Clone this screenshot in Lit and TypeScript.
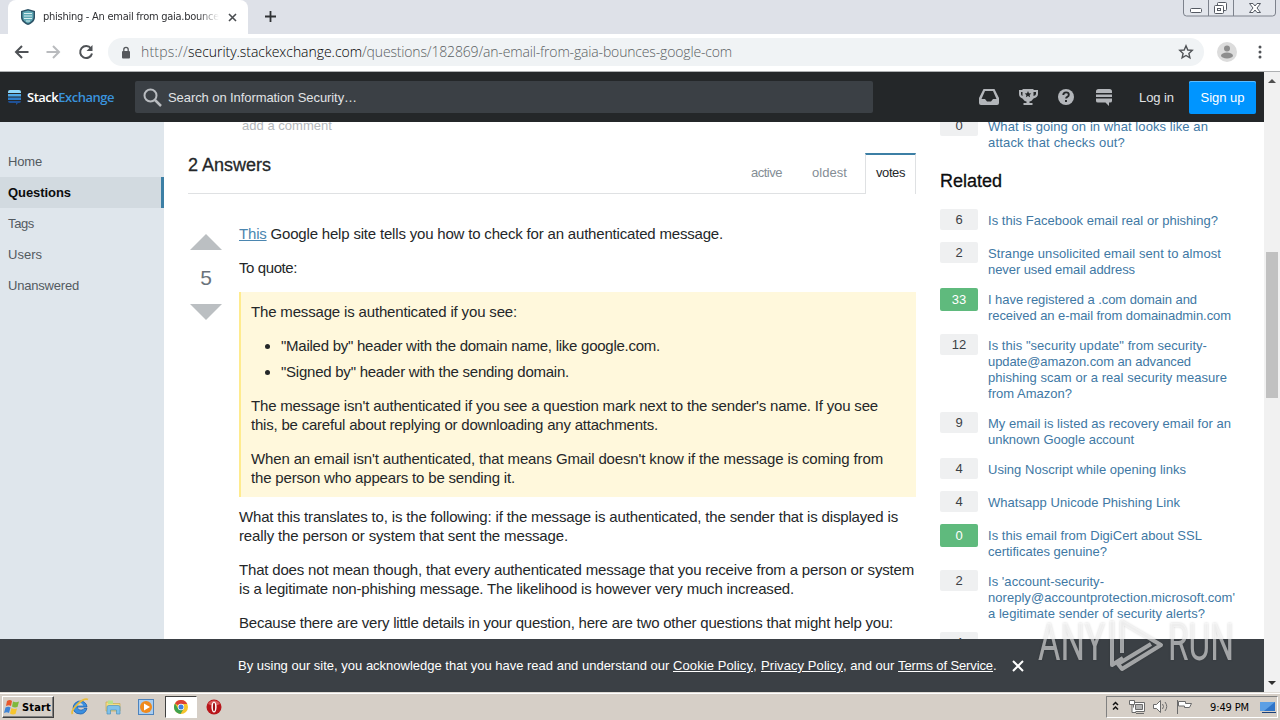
import { LitElement, css, html, svg } from 'lit';
import { customElement, property } from 'lit/decorators.js';

interface RelatedLink {
  votes: number;
  accepted?: boolean;
  lines: [string, number][];
}

const LINKED: RelatedLink = {
  votes: 0,
  lines: [
    ['What is going on in what looks like an', 220],
    ['attack that checks out?', 137],
  ],
};

const RELATED: RelatedLink[] = [
  { votes: 6, lines: [['Is this Facebook email real or phishing?', 230]] },
  {
    votes: 2,
    lines: [
      ['Strange unsolicited email sent to almost', 233],
      ['never used email address', 147],
    ],
  },
  {
    votes: 33,
    accepted: true,
    lines: [
      ['I have registered a .com domain and', 209],
      ['received an e-mail from domainadmin.com', 243],
    ],
  },
  {
    votes: 12,
    lines: [
      ['Is this "security update" from security-', 219],
      ['update@amazon.com an advanced', 203],
      ['phishing scam or a real security measure', 239],
      ['from Amazon?', 84],
    ],
  },
  {
    votes: 9,
    lines: [
      ['My email is listed as recovery email for an', 243],
      ['unknown Google account', 146],
    ],
  },
  { votes: 4, lines: [['Using Noscript while opening links', 198]] },
  { votes: 4, lines: [['Whatsapp Unicode Phishing Link', 192]] },
  {
    votes: 0,
    accepted: true,
    lines: [
      ['Is this email from DigiCert about SSL', 214],
      ['certificates genuine?', 119],
    ],
  },
  {
    votes: 2,
    lines: [
      ["Is 'account-security-", 116],
      ["noreply@accountprotection.microsoft.com'", 247],
      ['a legitimate sender of security alerts?', 217],
    ],
  },
  { votes: 4, lines: [['Email link in a suspicious message', 210]] },
];

const NAV: [string, number][] = [
  ['Home', 34],
  ['Questions', 63],
  ['Tags', 26],
  ['Users', 34],
  ['Unanswered', 71],
];

/** One line of text, tracked so that it runs exactly `width` pixels. */
@customElement('fit-line')
export class FitLine extends LitElement {
  @property({ type: Number }) width = 0;

  async firstUpdated() {
    await document.fonts.ready;
    const natural = this.getBoundingClientRect().width;
    const count = (this.textContent ?? '').length;
    if (this.width && count) {
      this.style.letterSpacing = `${(this.width - natural) / count}px`;
    }
  }

  render() {
    return html`<slot></slot>`;
  }

  static styles = css`
    :host {
      display: inline-block;
      white-space: pre;
    }
  `;
}

@customElement('browser-chrome')
export class BrowserChrome extends LitElement {
  render() {
    return html`
      <div class="tabs">
        <div class="tab">
          <svg class="shield" width="16" height="18" viewBox="0 0 16 18">
            <path d="M8 1 15 3v6c0 4-3 6.500-7 8-4-1.500-7-4-7-8V3z" fill="#2c5266" />
            <path d="M8 2.500 13.500 4v5c0 3-2.500 5-5.500 6.500C5 14 2.500 12 2.500 9V4z" fill="#5fa8b5" />
            <path d="M4 5.500h8M4 8h8M4 10.500h8M6 13h4" stroke="#d8eef0" stroke-width="1" />
          </svg>
          <div class="title"><fit-line width="181">phishing - An email from gaia.bounces</fit-line></div>
          <svg class="x" width="9" height="9" viewBox="0 0 9 9">
            <path d="M1 1l7 7M8 1l-7 7" stroke="#4a4d51" stroke-width="1.600" />
          </svg>
        </div>
        <svg class="plus" width="13" height="13" viewBox="0 0 13 13">
          <path d="M6.500 1v11M1 6.500h11" stroke="#303235" stroke-width="1.800" />
        </svg>
        <svg class="win" width="94" height="18" viewBox="0 0 94 18">
          <path d="M.5 0v13q0 3 3 3h86q3 0 3-3V0M25.500 0v16M50.500 0v16" fill="#e3e6ec" stroke="#7d828c" />
          <rect x="7.500" y="8.500" width="11" height="4" rx="1" fill="#fff" stroke="#555a63" />
          <rect x="34.500" y="2.500" width="9" height="8" rx="1" fill="#fff" stroke="#555a63" />
          <rect x="31.500" y="5.500" width="9" height="8" rx="1" fill="#fff" stroke="#555a63" />
          <rect x="34.500" y="8.500" width="3" height="2" fill="#fff" stroke="#555a63" />
          <path d="M66.500 3.500h3.500l2 2.500 2-2.500h3.500l-3.500 4.500 3.500 4.500h-3.500l-2-2.500-2 2.500h-3.500l3.500-4.500z" fill="#fff" stroke="#555a63" />
        </svg>
      </div>
      <div class="bar">
        <svg width="80" height="20" viewBox="0 0 80 20">
          <path d="M14.500 10H2M8 4l-6 6 6 6" fill="none" stroke="#4f5256" stroke-width="2" />
          <path d="M32.500 10H45M39 4l6 6-6 6" fill="none" stroke="#b9bbbe" stroke-width="2" />
          <path d="M77 6.500A6 6 0 1 0 78 11.500" fill="none" stroke="#4f5256" stroke-width="2" />
          <path d="M78.500 3v6h-6z" fill="#4f5256" />
        </svg>
        <div class="omnibox">
          <svg width="10" height="13" viewBox="0 0 10 13">
            <rect x="1" y="5" width="8" height="7.500" rx="1" fill="#55585c" />
            <path d="M2.800 5V3.500a2.200 2.200 0 0 1 4.400 0V5" fill="none" stroke="#55585c" stroke-width="1.300" />
          </svg>
          <div class="url">
            <fit-line width="47">https://</fit-line><fit-line class="host" width="174">security.stackexchange.com</fit-line><fit-line width="370">/questions/182869/an-email-from-gaia-bounces-google-com</fit-line>
          </div>
          <svg width="16" height="16" viewBox="0 0 16 16">
            <path d="M8 1.800 9.800 6l4.400.4-3.300 3 1 4.400L8 11.500l-3.900 2.300 1-4.400-3.300-3L6.200 6z" fill="none" stroke="#505357" stroke-width="1.400" />
          </svg>
        </div>
        <svg width="20" height="20" viewBox="0 0 20 20">
          <circle cx="10" cy="10" r="10" fill="#dcdcdc" />
          <circle cx="10" cy="6.500" r="3" fill="#8d8d8d" />
          <ellipse cx="10" cy="13.500" rx="6" ry="3" fill="#8d8d8d" />
        </svg>
        <svg class="menu" width="4" height="14" viewBox="0 0 4 14">
          <circle cx="2" cy="2" r="1.500" fill="#505357" />
          <circle cx="2" cy="7" r="1.500" fill="#505357" />
          <circle cx="2" cy="12" r="1.500" fill="#505357" />
        </svg>
      </div>
    `;
  }

  static styles = css`
    :host {
      display: block;
      height: 72px;
      font: 14px 'Open Sans', 'Noto Sans', sans-serif;
    }
    svg {
      display: block;
      flex: none;
    }
    .tabs {
      display: flex;
      height: 34px;
      background: #dee1e8;
    }
    .tab {
      display: flex;
      align-items: center;
      box-sizing: border-box;
      width: 240px;
      margin-left: 8px;
      padding: 0 11px 0 12px;
      border-radius: 8px 8px 0 0;
      background: #fff;
    }
    .title {
      width: 176px;
      margin: 0 9px 0 7px;
      overflow: hidden;
      font-family: 'DejaVu Sans Condensed', 'DejaVu Sans', sans-serif;
      font-size: 11px;
      font-stretch: condensed;
      line-height: 18px;
      color: #303134;
      mask-image: linear-gradient(90deg, #000 88%, transparent);
    }
    .plus {
      margin: 10px 0 0 16px;
    }
    .win {
      margin-left: auto;
      margin-right: 3px;
    }
    .bar {
      display: flex;
      align-items: center;
      box-sizing: border-box;
      height: 38px;
      padding: 0 18px 1px 14px;
      background: #fff;
      border-bottom: 1px solid #aeb0b2;
    }
    .omnibox {
      display: flex;
      flex: 1;
      align-items: center;
      height: 28px;
      margin: 0 13px 0 14px;
      padding: 0 10px 0 13px;
      border-radius: 14px;
      background: #f0f3f5;
    }
    .url {
      flex: 1;
      display: flex;
      margin-left: 10px;
      font-weight: 300;
      line-height: 20px;
      color: #5a5e62;
    }
    .host {
      color: #000;
    }
    .menu {
      margin-left: 21px;
    }
  `;
}

@customElement('site-header')
export class SiteHeader extends LitElement {
  render() {
    return html`
      <div class="logo">
        <svg width="13" height="15" viewBox="0 0 13 15">
          <path d="M0 3V2q0-2 2-2h9q2 0 2 2v1z" fill="#8fd8fb" />
          <path d="M0 4h13v2.500H0z" fill="#4fa9e8" />
          <path d="M0 7.500h13V10H0z" fill="#2f7fcb" />
          <path d="M0 11h13q0 2-2 2h-1l-2 2v-2H2q-2 0-2-2z" fill="#1f5196" />
        </svg>
        <fit-line width="87"><b>Stack</b><b class="ex">Exchange</b></fit-line>
      </div>
      <div class="search">
        <svg width="19" height="19" viewBox="0 0 19 19">
          <circle cx="7.500" cy="7.500" r="6" fill="none" stroke="#b9bcc0" stroke-width="2" />
          <path d="M12 12l6 6" stroke="#b9bcc0" stroke-width="2.500" />
        </svg>
        <fit-line width="189">Search on Information Security…</fit-line>
      </div>
      <svg class="icons" width="136" height="18" viewBox="0 0 136 18">
        <g fill="#b3b6ba">
          <path fill-rule="evenodd" d="M4.500 1h11L20 10v5q0 2-2 2H2q-2 0-2-2v-5zM6 3 2.500 11H6l2 2.500h4L14 11h3.500L14 3z" />
          <path fill-rule="evenodd" d="M43.500 1h11v1H59v4q0 3-4.500 4.500-1.500 2.500-4 3V15h3v2h-9v-2h3v-1.500q-2.500-.5-4-3Q40 9 40 6V2h3.500zM42 4v2q0 1.500 1.500 2V4zm12.500 0v4Q57 7.500 57 6V4zM49 3l-1 2.200-2.300.2 1.700 1.600-.5 2.300L49 8l2.100 1.300-.5-2.300 1.700-1.600-2.300-.2z" />
          <circle cx="87" cy="9" r="8" />
          <path d="M117 5V3.500q0-2.500 2.500-2.500h11q2.500 0 2.500 2.500V5zM117 6.500h16V9h-16zM117 10.500h16V13q0 1.500-2 1.500h-1V18l-3.500-3.500H119q-2 0-2-1.500z" />
        </g>
        <path d="M84.300 7q0-2.600 2.800-2.600 2.700 0 2.700 2.300 0 1.400-1.500 2.100-1.200.6-1.200 1.700M87 12v2" fill="none" stroke="#242729" stroke-width="1.900" />
      </svg>
      <fit-line class="login" width="35">Log in</fit-line>
      <div class="signup"><fit-line width="44">Sign up</fit-line></div>
    `;
  }

  static styles = css`
    :host {
      display: flex;
      align-items: center;
      box-sizing: border-box;
      flex: none;
      height: 50px;
      padding: 0 8px;
      background: #242729;
      font-size: 13px;
      color: #e1e3e5;
    }
    svg {
      display: block;
      flex: none;
    }
    .logo {
      display: flex;
      align-items: center;
      gap: 6px;
      width: 127px;
      font: 13px 'Open Sans', sans-serif;
      color: #fff;
    }
    .logo b {
      font-weight: 600;
    }
    .logo .ex {
      color: #3a93dc;
    }
    .search {
      display: flex;
      align-items: center;
      gap: 6px;
      box-sizing: border-box;
      width: 738px;
      height: 32px;
      padding-left: 8px;
      border-radius: 2px;
      background: #3b4045;
    }
    .search fit-line {
      padding-top: 1px;
    }
    .icons {
      margin-left: 106px;
    }
    .login {
      margin-left: 24px;
      padding-top: 1px;
    }
    .signup {
      display: flex;
      align-items: center;
      justify-content: center;
      width: 67px;
      height: 33px;
      margin-left: auto;
      border-radius: 2px;
      background: #0095ff;
      box-shadow: inset 0 1px 0 #5cbcff;
      color: #fff;
    }
  `;
}

@customElement('answer-post')
export class AnswerPost extends LitElement {
  render() {
    return html`
      <div class="votes">
        <svg width="32" height="16"><path d="M0 16 16 0l16 16z" fill="#bbbfc2" /></svg>
        <span>5</span>
        <svg width="32" height="16"><path d="M0 0h32L16 16z" fill="#bbbfc2" /></svg>
      </div>
      <div class="body">
        <p><fit-line width="484"><a>This</a> Google help site tells you how to check for an authenticated message.</fit-line></p>
        <p><fit-line width="58">To quote:</fit-line></p>
        <blockquote>
          <p><fit-line width="266">The message is authenticated if you see:</fit-line></p>
          <ul>
            <li><fit-line width="379">"Mailed by" header with the domain name, like google.com.</fit-line></li>
            <li><fit-line width="288">"Signed by" header with the sending domain.</fit-line></li>
          </ul>
          <p>
            <fit-line width="627">The message isn't authenticated if you see a question mark next to the sender's name. If you see</fit-line>
            <fit-line width="407">this, be careful about replying or downloading any attachments.</fit-line>
          </p>
          <p>
            <fit-line width="632">When an email isn't authenticated, that means Gmail doesn't know if the message is coming from</fit-line>
            <fit-line width="264">the person who appears to be sending it.</fit-line>
          </p>
        </blockquote>
        <p>
          <fit-line width="659">What this translates to, is the following: if the message is authenticated, the sender that is displayed is</fit-line>
          <fit-line width="329">really the person or system that sent the message.</fit-line>
        </p>
        <p>
          <fit-line width="675">That does not mean though, that every authenticated message that you receive from a person or system</fit-line>
          <fit-line width="555">is a legitimate non-phishing message. The likelihood is however very much increased.</fit-line>
        </p>
        <p><fit-line width="654">Because there are very little details in your question, here are two other questions that might help you:</fit-line></p>
      </div>
    `;
  }

  static styles = css`
    :host {
      display: flex;
      padding-top: 30px;
      font-size: 15px;
      line-height: 19px;
      color: #242729;
    }
    .votes {
      display: flex;
      flex-direction: column;
      align-items: center;
      width: 36px;
      margin-right: 15px;
      padding-top: 10px;
      font-size: 21px;
      color: #6a737c;
    }
    .votes svg {
      display: block;
    }
    .votes span {
      padding: 18px 0 17px;
    }
    .body {
      width: 677px;
    }
    p {
      display: flex;
      flex-direction: column;
      align-items: flex-start;
      margin: 0 0 15px;
    }
    a {
      color: #4b86b0;
      text-decoration: underline;
    }
    blockquote {
      margin: 0 0 10px;
      padding: 10px;
      border-left: 2px solid #ffeb8e;
      background: #fff8dc;
    }
    blockquote p:last-child {
      margin-bottom: 0;
    }
    ul {
      display: flex;
      flex-direction: column;
      gap: 7px;
      margin: 0 0 15px;
      padding-left: 30px;
    }
  `;
}

@customElement('related-item')
export class RelatedItem extends LitElement {
  @property({ attribute: false }) link!: RelatedLink;

  render() {
    return html`
      <span class="votes" ?data-accepted=${this.link.accepted}>${this.link.votes}</span>
      <div class="title">
        ${this.link.lines.map(([text, width]) => html`<fit-line width=${width}>${text}</fit-line>`)}
      </div>
    `;
  }

  static styles = css`
    :host {
      display: flex;
      align-items: flex-start;
      gap: 10px;
      min-height: 23px;
    }
    .votes {
      flex: none;
      width: 38px;
      border-radius: 2px;
      background: #eff0f1;
      line-height: 21px;
      text-align: center;
      color: #3b4045;
    }
    .votes[data-accepted] {
      background: #5fba7d;
      line-height: 23px;
      color: #fff;
    }
    .title {
      display: flex;
      flex-direction: column;
      align-items: flex-start;
      padding-top: 4px;
      line-height: 16px;
      color: #4078a4;
    }
  `;
}

const taskIcons = svg`
  <g transform="translate(0 0)">
    <path d="M3 13A7 6.500 -20 1 1 16 9H6q1 3.500 4 3.200 2.200-.2 3-1.700h3Q14 16 9.500 16 5 16 3 13z" fill="#3a8fe0" stroke="#1c5fae" stroke-width=".8" />
    <path d="M6 7.500Q6.500 5 9 5t3.200 2.500z" fill="#d8d4cc" />
    <path d="M1.500 16C-1 12 12-1 17 1.500" fill="none" stroke="#e9bd3c" stroke-width="1.800" />
  </g>
  <g transform="translate(33 1)">
    <path d="M2 3h6l1 1.500h7V12H2z" fill="#f4dd83" stroke="#c9a94e" stroke-width=".7" />
    <path d="M4 1.500h5V5H4z" fill="#b9e08a" />
    <path d="M3 8q0-1.500 2-1.500h9q2 0 2 1.500v7h-3.500v-4h-6v4H3z" fill="#7fc1ea" stroke="#4f93bd" stroke-width=".7" />
  </g>
  <g transform="translate(67 1)">
    <rect x=".5" y=".5" width="15" height="15" fill="#a9cdf0" stroke="#4d83bd" />
    <circle cx="8" cy="8" r="6" fill="#f08a1c" />
    <path d="M6 4.500 12 8l-6 3.500z" fill="#fff" />
  </g>
`;

@customElement('task-bar')
export class TaskBar extends LitElement {
  render() {
    return html`
      <div class="start">
        <svg width="16" height="16" viewBox="0 0 16 16">
          <path d="M3 2q3-2 5 0L7 7Q5 5.500 2 7z" fill="#e8582b" />
          <path d="M9 2.500q3 1.500 6 0L13.500 8q-3 1-5.500-.5z" fill="#7fb93c" />
          <path d="M1.500 8.500q3-1.500 5 0L5 14q-2-1.500-5 0z" fill="#3f84d6" />
          <path d="M7.500 9q2.500 1.500 5.500.5L11.500 15q-3 1-5.500-.5z" fill="#f7c52d" />
        </svg>
        <fit-line width="29">Start</fit-line>
      </div>
      <svg class="quick" width="84" height="18" viewBox="0 0 84 18">${taskIcons}</svg>
      <div class="active">
        <svg width="14" height="14" viewBox="0 0 14 14">
          <circle cx="7" cy="7" r="7" fill="#f6c42c" />
          <path d="M7 7 1 3.400A7 7 0 0 1 13.200 4H7z" fill="#dc4136" />
          <path d="M1 3.400A7 7 0 0 0 6.500 14L9.800 8.500 7 7 4 8.500z" fill="#3fa24f" />
          <circle cx="7" cy="7" r="3.200" fill="#fff" />
          <circle cx="7" cy="7" r="2.500" fill="#3f7fe0" />
        </svg>
      </div>
      <svg width="16" height="16" viewBox="0 0 16 16">
        <circle cx="8" cy="8" r="7.500" fill="#b8161b" />
        <path d="M2 5a7 7 0 0 1 12 0q-6 3-12 0z" fill="#d9595a" />
        <ellipse cx="8" cy="8" rx="2.600" ry="5.500" fill="#fff" />
        <ellipse cx="8" cy="8" rx="1.100" ry="4.300" fill="#a01217" />
      </svg>
      <div class="tray">
        <svg width="86" height="18" viewBox="0 0 86 18">
          <path d="M1 7l2.500-2.500L6 7M1 11.500 3.500 9 6 11.500" fill="none" stroke="#111" stroke-width="1.500" />
          <g fill="#fff" stroke="#6b6b6b">
            <path d="M21.500 4.500h11v9h-11z" />
            <path d="M23.500 6.500h7v5h-7z" fill="#b4b4b4" />
            <path d="M24 15.500h8" />
            <path d="M17.500 2.500v4h5v-4zM20 6.500v8h4" />
            <path d="M41.500 6.500h3l4-4v12l-4-4h-3z" />
            <path d="M50.500 6q2 2.500 0 5M53 4q3.500 4.500 0 9" fill="none" />
            <path d="M65.500 2v14" />
            <path d="M66.500 3.500h7v2h6l-2 4h-5v-1.500h-6z" />
          </g>
        </svg>
        <fit-line width="39">9:49 PM</fit-line>
        <svg width="16" height="14" viewBox="0 0 16 14">
          <path d="M0 2h15v9H0z" fill="#2f74c8" />
          <path d="M0 2h15L4 11H0z" fill="#5c9fe4" />
          <path d="M2 12.500h14" stroke="#1a3f78" />
        </svg>
      </div>
    `;
  }

  static styles = css`
    :host {
      display: flex;
      align-items: center;
      box-sizing: border-box;
      height: 28px;
      padding: 2px 2px 0;
      background: #d6cfc7;
      box-shadow: inset 0 1px 0 #e0dcd6, inset 0 2px 0 #fff;
      font: 11px 'DejaVu Sans Condensed', 'DejaVu Sans', sans-serif;
      color: #000;
    }
    svg {
      display: block;
      flex: none;
    }
    .start {
      display: flex;
      align-items: center;
      gap: 2px;
      box-sizing: border-box;
      width: 52px;
      height: 22px;
      padding-left: 1px;
      border: 1px solid;
      border-color: #fff #404040 #404040 #fff;
      box-shadow: inset -1px -1px 0 #808080;
      font-weight: bold;
    }
    .quick {
      margin: 0 10px 0 17px;
    }
    .active {
      display: flex;
      align-items: center;
      justify-content: center;
      box-sizing: border-box;
      width: 32px;
      height: 22px;
      margin-right: 9px;
      border: 1px solid;
      border-color: #404040 #fff #fff #404040;
      background: #fff;
    }
    .tray {
      display: flex;
      align-items: center;
      box-sizing: border-box;
      width: 172px;
      height: 22px;
      margin-left: auto;
      padding-left: 5px;
      border: 1px solid;
      border-color: #808080 #fff #fff #808080;
    }
    .tray fit-line {
      margin: 0 11px 0 12px;
    }
  `;
}

@customElement('app-root')
export class AppRoot extends LitElement {
  render() {
    return html`
      <browser-chrome></browser-chrome>
      <div class="viewport">
        <div class="page">
          <site-header></site-header>
          <div class="columns">
            <nav>
              ${NAV.map(
                ([label, width]) => html`
                  <div class="nav-item" ?data-current=${label === 'Questions'}>
                    <fit-line width=${width}>${label}</fit-line>
                  </div>
                `,
              )}
            </nav>
            <main>
              <div class="add"><fit-line width="90">add a comment</fit-line></div>
              <div class="answers">
                <h2><fit-line width="83">2 Answers</fit-line></h2>
                <span class="tab"><fit-line width="31">active</fit-line></span>
                <span class="tab"><fit-line width="35">oldest</fit-line></span>
                <span class="tab current"><fit-line width="29">votes</fit-line></span>
              </div>
              <answer-post></answer-post>
            </main>
            <aside>
              <related-item .link=${LINKED}></related-item>
              <h2><fit-line width="62">Related</fit-line></h2>
              <div class="list">
                ${RELATED.map((link) => html`<related-item .link=${link}></related-item>`)}
              </div>
            </aside>
          </div>
          <div class="notice">
            <div class="consent">
              <fit-line width="435">By using our site, you acknowledge that you have read and understand our </fit-line>
              <fit-line class="link" width="80">Cookie Policy</fit-line>
              <fit-line width="8">, </fit-line>
              <fit-line class="link" width="82">Privacy Policy</fit-line>
              <fit-line width="55">, and our </fit-line>
              <fit-line class="link" width="95">Terms of Service</fit-line>
              <fit-line width="4">.</fit-line>
            </div>
            <svg width="12" height="12" viewBox="0 0 12 12">
              <path d="M1 1l10 10M11 1 1 11" stroke="#fff" stroke-width="2" />
            </svg>
          </div>
        </div>
        <div class="scrollbar">
          <svg width="8" height="4"><path d="M0 4 4 0l4 4z" fill="#505050" /></svg>
          <div class="thumb"></div>
          <svg width="8" height="4"><path d="M0 0h8L4 4z" fill="#303030" /></svg>
        </div>
      </div>
      <task-bar></task-bar>
      <svg class="watermark" width="200" height="66" viewBox="0 0 200 66">
        <g fill="#fff" fill-opacity=".55" font-family="Roboto, sans-serif" font-size="52">
          <text x="2" y="50" textLength="67" lengthAdjust="spacingAndGlyphs">ANY</text>
          <text x="132" y="50" textLength="66" lengthAdjust="spacingAndGlyphs">RUN</text>
        </g>
        <path
          d="M86 43V12l39 23-39 24-4-5 33-20M76 11v44l11-7"
          fill="none"
          stroke="#fff"
          stroke-opacity=".55"
          stroke-width="4"
          stroke-linejoin="round"
        />
      </svg>
    `;
  }

  static styles = css`
    :host {
      position: relative;
      display: flex;
      flex-direction: column;
      width: 1280px;
      height: 720px;
      overflow: hidden;
      background: #fff;
      font: 13px 'Liberation Sans', Arial, sans-serif;
    }
    .viewport {
      display: flex;
      flex: 1;
      min-height: 0;
    }
    .page {
      display: flex;
      flex-direction: column;
      width: 1264px;
    }
    .columns {
      display: flex;
      flex: 1;
      min-height: 0;
      overflow: hidden;
    }
    nav {
      box-sizing: border-box;
      width: 164px;
      padding-top: 24px;
      background: #dfe6ec;
      color: #535a60;
    }
    .nav-item {
      padding-left: 8px;
      line-height: 31px;
    }
    .nav-item[data-current] {
      border-right: 3px solid #3c7fa5;
      background: #d2dae0;
      font-weight: bold;
      color: #0c0d0e;
    }
    main {
      width: 728px;
      margin: 0 24px;
    }
    .add {
      height: 31px;
      padding-left: 54px;
      line-height: 8px;
      color: #b4b8bc;
    }
    .answers {
      display: flex;
      box-sizing: border-box;
      height: 41px;
      border-bottom: 1px solid #dfe1e3;
    }
    h2 {
      margin: 0;
      font-size: 18px;
      font-weight: normal;
      line-height: 24px;
      color: #242729;
      -webkit-text-stroke: 0.3px;
    }
    .answers h2 {
      margin-right: auto;
    }
    .tab {
      box-sizing: border-box;
      margin-left: 10px;
      padding: 0 10px;
      line-height: 39px;
      color: #848d95;
    }
    .tab.current {
      height: 41px;
      margin-left: 8px;
      border: 1px solid #dfe1e3;
      border-top: 2px solid #3c7fa5;
      border-bottom: 0;
      background: #fff;
      line-height: 36px;
      color: #242729;
    }
    aside {
      width: 310px;
      margin-top: -7px;
    }
    aside > h2 {
      margin: 18px 0 16px;
      color: #0c0d0e;
    }
    .list {
      display: flex;
      flex-direction: column;
      gap: 10px;
    }
    .notice {
      display: flex;
      align-items: center;
      box-sizing: border-box;
      flex: none;
      gap: 15px;
      height: 53px;
      padding-left: 238px;
      background: #3b4045;
      color: #fff;
    }
    .consent {
      display: flex;
    }
    .link {
      text-decoration: underline;
    }
    .scrollbar {
      display: flex;
      flex-direction: column;
      align-items: center;
      justify-content: space-between;
      box-sizing: border-box;
      width: 16px;
      padding: 7px 0;
      background: #f1f1f1;
    }
    .thumb {
      width: 12px;
      height: 146px;
      margin: 169px 0 auto;
      background: #c1c1c1;
    }
    .watermark {
      position: absolute;
      left: 1036px;
      top: 610px;
      filter: drop-shadow(0 0 1px rgb(0 0 0 / 0.3));
    }
  `;
}

declare global {
  interface HTMLElementTagNameMap {
    'app-root': AppRoot;
    'browser-chrome': BrowserChrome;
    'site-header': SiteHeader;
    'answer-post': AnswerPost;
    'related-item': RelatedItem;
    'task-bar': TaskBar;
    'fit-line': FitLine;
  }
}
